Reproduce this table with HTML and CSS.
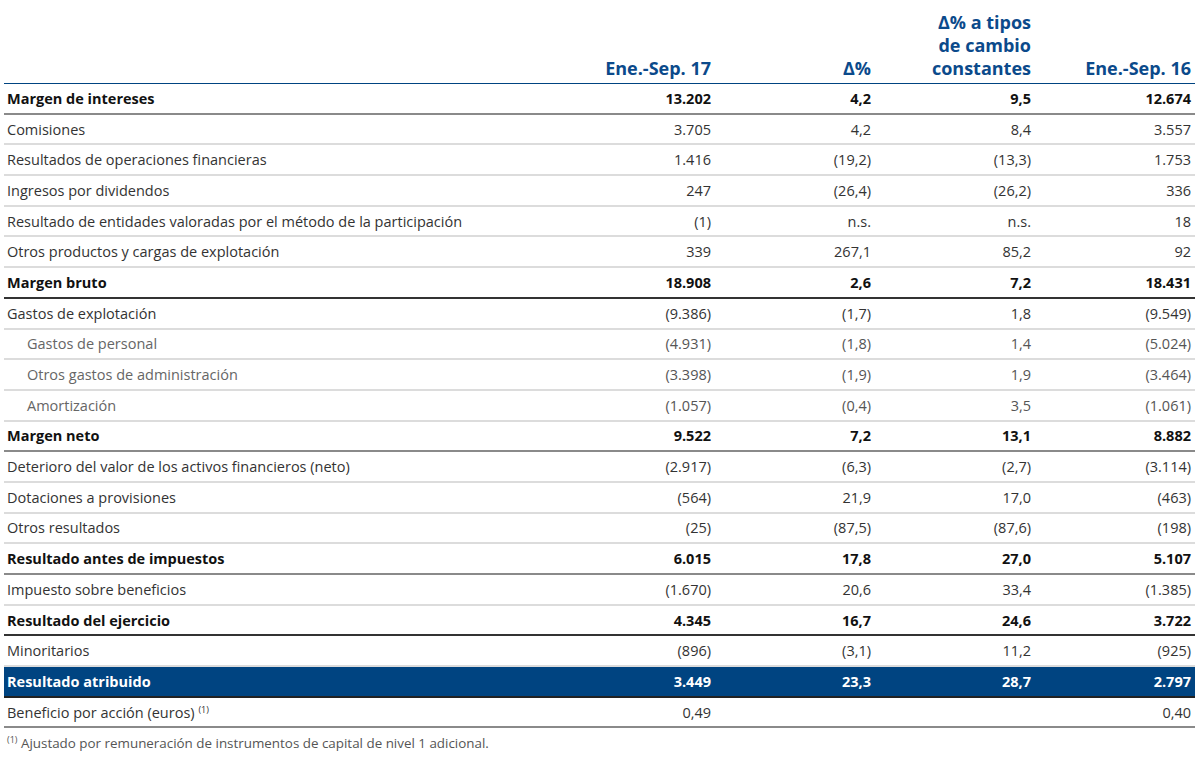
FILE: index.html
```html
<!DOCTYPE html>
<html lang="es">
<head>
<meta charset="utf-8">
<link rel="stylesheet" href="styles.css">
</head>
<body>
<table class="pl">
  <thead>
    <tr>
      <th class="lbl"></th>
      <th>Ene.-Sep. 17</th>
      <th>Δ%</th>
      <th>Δ% a tipos<br>de cambio<br>constantes</th>
      <th>Ene.-Sep. 16</th>
    </tr>
  </thead>
  <tbody>
    <tr class="bold b-mid"><td>Margen de intereses</td><td>13.202</td><td>4,2</td><td>9,5</td><td>12.674</td></tr>
    <tr><td>Comisiones</td><td>3.705</td><td>4,2</td><td>8,4</td><td>3.557</td></tr>
    <tr><td>Resultados de operaciones financieras</td><td>1.416</td><td>(19,2)</td><td>(13,3)</td><td>1.753</td></tr>
    <tr><td>Ingresos por dividendos</td><td>247</td><td>(26,4)</td><td>(26,2)</td><td>336</td></tr>
    <tr><td>Resultado de entidades valoradas por el método de la participación</td><td>(1)</td><td>n.s.</td><td>n.s.</td><td>18</td></tr>
    <tr><td>Otros productos y cargas de explotación</td><td>339</td><td>267,1</td><td>85,2</td><td>92</td></tr>
    <tr class="bold b-dark"><td>Margen bruto</td><td>18.908</td><td>2,6</td><td>7,2</td><td>18.431</td></tr>
    <tr><td>Gastos de explotación</td><td>(9.386)</td><td>(1,7)</td><td>1,8</td><td>(9.549)</td></tr>
    <tr class="sub"><td>Gastos de personal</td><td>(4.931)</td><td>(1,8)</td><td>1,4</td><td>(5.024)</td></tr>
    <tr class="sub"><td>Otros gastos de administración</td><td>(3.398)</td><td>(1,9)</td><td>1,9</td><td>(3.464)</td></tr>
    <tr class="sub"><td>Amortización</td><td>(1.057)</td><td>(0,4)</td><td>3,5</td><td>(1.061)</td></tr>
    <tr class="bold b-mid"><td>Margen neto</td><td>9.522</td><td>7,2</td><td>13,1</td><td>8.882</td></tr>
    <tr><td>Deterioro del valor de los activos financieros (neto)</td><td>(2.917)</td><td>(6,3)</td><td>(2,7)</td><td>(3.114)</td></tr>
    <tr><td>Dotaciones a provisiones</td><td>(564)</td><td>21,9</td><td>17,0</td><td>(463)</td></tr>
    <tr><td>Otros resultados</td><td>(25)</td><td>(87,5)</td><td>(87,6)</td><td>(198)</td></tr>
    <tr class="bold b-mid"><td>Resultado antes de impuestos</td><td>6.015</td><td>17,8</td><td>27,0</td><td>5.107</td></tr>
    <tr><td>Impuesto sobre beneficios</td><td>(1.670)</td><td>20,6</td><td>33,4</td><td>(1.385)</td></tr>
    <tr class="bold b-dark"><td>Resultado del ejercicio</td><td>4.345</td><td>16,7</td><td>24,6</td><td>3.722</td></tr>
    <tr><td>Minoritarios</td><td>(896)</td><td>(3,1)</td><td>11,2</td><td>(925)</td></tr>
    <tr class="bold hl"><td>Resultado atribuido</td><td>3.449</td><td>23,3</td><td>28,7</td><td>2.797</td></tr>
    <tr class="b-mid"><td>Beneficio por acción (euros) <sup>(1)</sup></td><td>0,49</td><td></td><td></td><td>0,40</td></tr>
  </tbody>
</table>
<p class="note"><sup>(1)</sup> Ajustado por remuneración de instrumentos de capital de nivel 1 adicional.</p>
</body>
</html>
```
FILE: styles.css
```css
html, body {
  margin: 0;
  padding: 0;
  background: #fff;
}
body {
  padding: 0 4px 0 4px;
  font-family: "Open Sans", "Liberation Sans", sans-serif;
  color: #333;
}
.pl {
  width: 1191px;
  border-collapse: collapse;
  table-layout: fixed;
}
.pl th {
  height: 80px;
  padding: 0 4px 3px 0;
  vertical-align: bottom;
  text-align: right;
  color: #0b4a8b;
  font-size: 18px;
  font-weight: 700;
  line-height: 23px;
  width: 156px;
  border-bottom: 1px solid #004481;
}
.pl th.lbl {
  width: auto;
}
.pl td {
  height: 28.7px;
  padding: 0 4px 0 3px;
  font-size: 14.5px;
  font-weight: 400;
  text-align: right;
  border-bottom: 2px solid #dcdcdc;
  white-space: nowrap;
  vertical-align: middle;
}
.pl td:first-child {
  text-align: left;
}
.pl tr.bold td {
  font-weight: 700;
  color: #111;
}
.pl tr.sub td {
  color: #555;
}
.pl tr.sub td:first-child {
  padding-left: 23px;
  color: #666;
}
.pl tr.b-mid td {
  border-bottom: 2px solid #8a8a8a;
}
.pl tr.b-dark td {
  border-bottom: 2px solid #333;
}
.pl tr.hl td {
  background: #004481;
  color: #fff;
  border-bottom: 2px solid #222;
}
sup {
  font-size: 9px;
  vertical-align: 5px;
  line-height: 0;
}
.note {
  margin: 6px 0 0 3px;
  font-size: 13.4px;
  color: #555;
}
```
